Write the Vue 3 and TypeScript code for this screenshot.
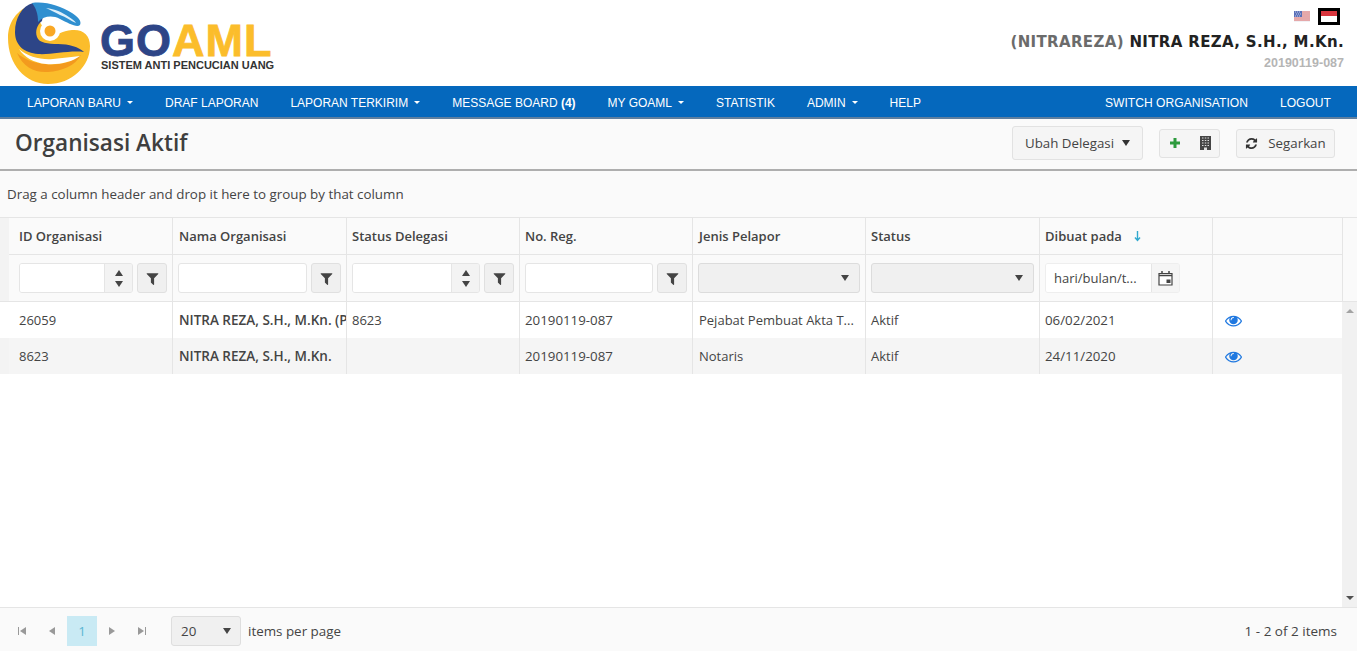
<script setup lang="ts">
interface Row { id: string; name: string; del: string; reg: string; jenis: string; status: string; date: string }
const rows: Row[] = [
  { id: '26059', name: 'NITRA REZA, S.H., M.Kn. (PPAT)', del: '8623', reg: '20190119-087', jenis: 'Pejabat Pembuat Akta T...', status: 'Aktif', date: '06/02/2021' },
  { id: '8623', name: 'NITRA REZA, S.H., M.Kn.', del: '', reg: '20190119-087', jenis: 'Notaris', status: 'Aktif', date: '24/11/2020' }
]
const navLeft = [
  { t: 'LAPORAN BARU', c: true }, { t: 'DRAF LAPORAN', c: false }, { t: 'LAPORAN TERKIRIM', c: true },
  { t: 'MESSAGE BOARD', b: '(4)', c: false }, { t: 'MY GOAML', c: true }, { t: 'STATISTIK', c: false },
  { t: 'ADMIN', c: true }, { t: 'HELP', c: false }
]
const filter = 'M1595 295q17 41-14 70l-493 493v742q0 42-39 59-13 5-25 5-27 0-45-19l-256-256q-19-19-19-45v-486l-493-493q-31-29-14-70 17-39 59-39h1280q42 0 59 39z'
const eye = 'M1664 960q-152-236-381-353 61 104 61 225 0 185-131.500 316.500t-316.500 131.500-316.500-131.500-131.500-316.500q0-121 61-225-229 117-381 353 133 205 333.500 326.500t434.500 121.500 434.500-121.500 333.500-326.500zm-720-384q0-20-14-34t-34-14q-125 0-214.500 89.500t-89.500 214.500q0 20 14 34t34 14 34-14 14-34q0-86 61-147t147-61q20 0 34-14t14-34zm848 384q0 34-20 69-140 230-376.500 368.500t-499.500 138.500-499.500-139-376.500-368q-20-35-20-69t20-69q140-229 376.500-368t499.500-139 499.500 139 376.500 368q20 35 20 69z'
const refresh = 'M1639 1056q0 5-1 7-64 268-268 434.500t-478 166.500q-146 0-282.500-55t-243.500-157l-129 129q-19 19-45 19t-45-19-19-45v-448q0-26 19-45t45-19h448q26 0 45 19t19 45-19 45l-137 137q71 66 161 102t187 36q134 0 250-65t186-179q11-17 53-117 8-23 30-23h192q13 0 22.500 9.500t9.500 22.500zm25-800v448q0 26-19 45t-45 19h-448q-26 0-45-19t-19-45 19-45l138-138q-148-137-349-137-134 0-250 65t-186 179q-11 17-53 117-8 23-30 23h-199q-13 0-22.500-9.500t-9.500-22.500v-7q65-268 270-434.500t480-166.500q146 0 284 55.500t245 156.500l130-129q19-19 45-19t45 19 19 45z'
</script>

<template>
  <div class="page">
    <header class="top">
      <div class="logo">
        <svg class="mark" width="84" height="84" viewBox="7 1 84 84">
          <path d="M30 5C14 12 8 25 8 38c0 26 17 46 40 46 24 0 42-18 42-38 0-11-7-17-18-16-10 1-16 6-24 6z" fill="#fbbd2b"/>
          <path d="M17 53c6 14 18 20 31 19 14-1 27-6 33-17-9 7-22 11-36 9-12-1-21-5-28-11z" fill="#f39a1e"/>
          <path d="M19 49c9 8 22 11 34 10 9-1 19-2 27-3-8 6-21 9-34 8-12-1-22-7-27-15z" fill="#fff"/>
          <path d="M33 3C22 6 15 18 15 32c0 14 10 21 23 22 13 1 32-4 46-2-5-5-15-8-26-8-10 0-19-1-21-7-2-6 0-12 5-16 2-8-1-14-9-18z" fill="#2d4587"/>
          <path d="M32 3c14-2 28 3 40 10 6 4 10 8 8 12-3 3-12-2-20-6-8-4-16-3-22 3 0-8-2-14-6-19z" fill="#2f8fd0"/>
          <path d="M46 8c9 1 16 4 23 9 3 2 6 4 7 6-5-2-10-6-16-8-5-3-10-5-14-7z" fill="#dff0fa"/>
          <circle cx="50" cy="31" r="10" fill="#fff"/>
          <circle cx="50" cy="31" r="5.500" fill="#f9a825"/>
        </svg>
        <div class="logotext">
          <div class="word"><span class="go">GO</span><span class="aml">AML</span></div>
          <div class="tag">SISTEM ANTI PENCUCIAN UANG</div>
        </div>
      </div>
      <div class="user">
        <div class="flags">
          <svg class="us" width="16" height="11" viewBox="0 0 16 11">
            <rect width="16" height="11" fill="#f1f1f5"/>
            <path d="M0 1h16M0 3h16M0 5h16M0 7h16M0 9h16" stroke="#d9605f" stroke-width="1"/>
            <rect width="8" height="6" fill="#5a70b8"/>
            <path d="M1 1h1M3 1h1M5 1h1M2 3h1M4 3h1M6 3h1M1 5h1M3 5h1M5 5h1" stroke="#dfe4f5" stroke-width=".8"/>
          </svg>
          <span class="id-box"><span class="id-flag"></span></span>
        </div>
        <div class="name"><span class="uname">(NITRAREZA)</span> NITRA REZA, S.H., M.Kn.</div>
        <div class="reg">20190119-087</div>
      </div>
    </header>

    <nav class="nav">
      <div class="nav-group left">
        <a v-for="n in navLeft" :key="n.t" class="nav-item">
          {{ n.t }}<b v-if="n.b">&nbsp;{{ n.b }}</b><i v-if="n.c" class="caret"></i>
        </a>
      </div>
      <div class="nav-group">
        <a class="nav-item">SWITCH ORGANISATION</a>
        <a class="nav-item">LOGOUT</a>
      </div>
    </nav>

    <section class="titlebar">
      <h1>Organisasi Aktif</h1>
      <div class="actions">
        <button class="btn big">Ubah Delegasi<i class="tri"></i></button>
        <div class="btn pair">
          <svg width="12" height="12" viewBox="0 0 12 12"><path d="M4.500 1h3v3.500H11v3H7.500V11h-3V7.500H1v-3h3.500z" fill="#2e9b3e"/></svg>
          <svg width="11" height="14" viewBox="0 0 11 14">
            <rect x="0" y="0" width="11" height="14" fill="#444"/>
            <path d="M2 2h1.500M4.800 2h1.500M7.500 2H9M2 4.500h1.500M4.800 4.500h1.500M7.500 4.500H9M2 7h1.500M4.800 7h1.500M7.500 7H9M2 9.500h1.500M4.800 9.500h1.500M7.500 9.500H9" stroke="#ddd" stroke-width="1.200"/>
            <rect x="4" y="11.500" width="3" height="2.500" fill="#ddd"/>
          </svg>
        </div>
        <button class="btn seg">
          <svg width="13" height="13" viewBox="0 0 1792 1792"><path :d="refresh" fill="#333"/></svg>
          Segarkan
        </button>
      </div>
    </section>

    <div class="groupbar">Drag a column header and drop it here to group by that column</div>

    <div class="grid">
      <div class="head-wrap">
        <div class="row head">
          <div class="gcell"></div>
          <div class="c">ID Organisasi</div>
          <div class="c tx">Nama Organisasi</div>
          <div class="c">Status Delegasi</div>
          <div class="c">No. Reg.</div>
          <div class="c tx">Jenis Pelapor</div>
          <div class="c">Status</div>
          <div class="c">Dibuat pada
            <svg class="sort" width="9" height="12" viewBox="0 0 9 12"><path d="M4.500 1v9M2 7.500l2.500 3 2.500-3" fill="none" stroke="#31a9cf" stroke-width="1.400"/></svg>
          </div>
          <div class="c"></div>
        </div>
        <div class="row filt">
          <div class="gcell"></div>
          <div class="c f">
            <div class="num"><span class="inp"></span><span class="spin"><i class="up"></i><i class="dn"></i></span></div>
            <span class="fbtn"><svg width="15" height="15" viewBox="0 0 1792 1792"><path :d="filter" fill="#444"/></svg></span>
          </div>
          <div class="c f">
            <span class="inp solo"></span>
            <span class="fbtn"><svg width="15" height="15" viewBox="0 0 1792 1792"><path :d="filter" fill="#444"/></svg></span>
          </div>
          <div class="c f">
            <div class="num wide"><span class="inp"></span><span class="spin"><i class="up"></i><i class="dn"></i></span></div>
            <span class="fbtn"><svg width="15" height="15" viewBox="0 0 1792 1792"><path :d="filter" fill="#444"/></svg></span>
          </div>
          <div class="c f">
            <span class="inp solo s128"></span>
            <span class="fbtn"><svg width="15" height="15" viewBox="0 0 1792 1792"><path :d="filter" fill="#444"/></svg></span>
          </div>
          <div class="c f"><span class="sel"><i class="dn"></i></span></div>
          <div class="c f"><span class="sel s163"><i class="dn"></i></span></div>
          <div class="c f">
            <div class="date">
              <span class="dtxt">hari/bulan/t...</span>
              <span class="cal">
                <svg width="15" height="16" viewBox="0 0 15 16">
                  <path d="M1 3.500h13v11.500H1z" fill="#fff" stroke="#444" stroke-width="1.200"/>
                  <path d="M1 5.500h13" stroke="#444" stroke-width="1.500"/>
                  <path d="M4 1v3M11 1v3" stroke="#444" stroke-width="1.500"/>
                  <rect x="8.500" y="9.500" width="4" height="3.500" fill="#444"/>
                </svg>
              </span>
            </div>
          </div>
          <div class="c"></div>
        </div>
      </div>

      <div class="body">
        <div class="rows">
          <div v-for="(r, i) in rows" :key="r.id" class="row data" :class="{ alt: i === 1 }">
            <div class="c">{{ r.id }}</div>
            <div class="c strong tx">{{ r.name }}</div>
            <div class="c">{{ r.del }}</div>
            <div class="c num-txt">{{ r.reg }}</div>
            <div class="c tx">{{ r.jenis }}</div>
            <div class="c">{{ r.status }}</div>
            <div class="c num-txt">{{ r.date }}</div>
            <div class="c"><svg class="eye" width="17" height="17" viewBox="0 0 1792 1792"><path :d="eye" fill="#1f78e0"/></svg></div>
          </div>
        </div>
        <div class="scroll">
          <i class="s-up"></i>
          <i class="s-dn"></i>
        </div>
      </div>

      <footer class="pager">
        <div class="pg-left">
          <span class="pg"><i class="bar"></i><i class="tl"></i></span>
          <span class="pg"><i class="tl"></i></span>
          <span class="pg cur">1</span>
          <span class="pg"><i class="tr"></i></span>
          <span class="pg"><i class="tr"></i><i class="bar"></i></span>
          <span class="size">20<i class="dn"></i></span>
          <span class="ipp">items per page</span>
        </div>
        <div class="count">1 - 2 of 2 items</div>
      </footer>
    </div>
  </div>
</template>

<style>
html, body { margin: 0; padding: 0; background: #fff; overflow: hidden; }
</style>

<style scoped>
.page { height: 651px; display: flex; flex-direction: column; font-family: "Open Sans", "Noto Sans", sans-serif; font-size: 13px; color: #444; overflow: hidden; }
.top { height: 86px; flex: none; background: #fff; display: flex; justify-content: space-between; padding: 0 13px 0 7px; box-sizing: border-box; }
.logo { display: flex; align-items: flex-start; }
.mark { margin-top: 1px; flex: none; }
.logotext { margin: 22px 0 0 9px; }
.word { font-family: "Liberation Sans", sans-serif; font-weight: 700; font-size: 45px; line-height: 37px; letter-spacing: 1px; height: 37px; -webkit-text-stroke: .8px currentColor; }
.go { color: #2d4587; }
.aml { color: #fbbd2b; }
.tag { font-family: "Liberation Sans", sans-serif; font-weight: 700; font-size: 11px; line-height: 12px; color: #333; white-space: nowrap; margin-left: 1px; }
.user { display: flex; flex-direction: column; align-items: flex-end; }
.flags { display: flex; align-items: center; gap: 8px; margin-top: 8px; padding-right: 4px; height: 17px; }
.id-box { width: 22px; height: 17px; background: #000; display: flex; align-items: center; justify-content: center; }
.id-flag { width: 16px; height: 11px; background: linear-gradient(#d9363e 50%, #fff 50%); }
.name { font-family: "DejaVu Sans", sans-serif; font-weight: 700; font-size: 15px; line-height: 18px; color: #222; margin-top: 8px; letter-spacing: .35px; white-space: nowrap; }
.uname { color: #6b6b6b; }
.reg { font-family: "Liberation Sans", sans-serif; font-weight: 700; font-size: 12.500px; line-height: 14px; color: #b5b5b5; margin-top: 5px; }

.nav { height: 33px; flex: none; background: #0568bd; border-bottom: 2px solid #5f7f9f; box-sizing: border-box; display: flex; justify-content: space-between; padding: 0 10px 0 11px; font-family: "Liberation Sans", sans-serif; font-size: 12.100px; color: #fff; }
.nav-group { display: flex; }
.left { font-size: 12px; }
.nav-item { display: flex; align-items: center; padding: 2px 16px 0; white-space: pre; }
.caret { width: 0; height: 0; border-left: 3px solid transparent; border-right: 3px solid transparent; border-top: 3px solid #fff; margin-left: 6px; }

.titlebar { height: 52px; flex: none; background: #fafafa; border-bottom: 2px solid #aeaeae; box-sizing: border-box; display: flex; justify-content: space-between; align-items: center; padding: 0 22px 2px 15px; font-size: 13.300px; }
h1 { margin: 0 0 2px; font-size: 22.600px; font-weight: 600; color: #3f3f3f; }
.actions { display: flex; align-items: center; gap: 16px; }
.btn { font: inherit; color: #444; background: #f5f5f5; border: 1px solid #e2e2e2; border-radius: 3px; box-sizing: border-box; display: flex; align-items: center; padding: 0; }
.big { height: 34px; width: 131px; justify-content: center; gap: 8px; }
.pair { height: 29px; width: 61px; justify-content: center; gap: 19px; }
.seg { height: 29px; width: 99px; justify-content: center; gap: 10px; }
.tri { width: 0; height: 0; border-left: 4px solid transparent; border-right: 4px solid transparent; border-top: 6px solid #333; }

.groupbar { height: 47px; flex: none; background: #fafafa; box-sizing: border-box; padding: 14px 0 0 7px; line-height: 18px; border-bottom: 1px solid #e5e5e5; font-size: 13.370px; }

.grid { flex: 1; display: flex; flex-direction: column; min-height: 0; }
.row { display: grid; grid-template-columns: 9px 163px 174px 173px 173px 173px 174px 173px 131px; }
.head-wrap { background: #fafafa; flex: none; }
.head { height: 37px; }
.head .c { font-weight: 600; line-height: 36px; border-bottom: 1px solid #e5e5e5; }
.filt { border-bottom: 1px solid #e5e5e5; height: 46px; }
.gcell { background: #f3f3f3; }
.c { border-left: 1px solid #e5e5e5; padding: 0 5px; box-sizing: border-box; white-space: nowrap; overflow: hidden; position: relative; }
.tx { padding-left: 6px; }
.row > .gcell + .c { border-left: 0; padding-left: 10px; }
.head > .c:last-child, .filt > .c:last-child { border-right: 1px solid #e5e5e5; }
.sort { margin-left: 8px; vertical-align: -1px; }
.f { display: flex; align-items: center; gap: 4px; }
.inp { display: block; background: #fff; box-sizing: border-box; height: 30px; }
.solo { width: 129px; border: 1px solid #e5e5e5; border-radius: 3px; flex: none; }
.s128 { width: 128px; }
.num { display: flex; width: 114px; height: 30px; flex: none; border: 1px solid #e5e5e5; border-radius: 3px; box-sizing: border-box; overflow: hidden; }
.num .inp { width: 85px; height: 28px; border-right: 1px solid #e5e5e5; flex: none; }
.num.wide { width: 128px; }
.num.wide .inp { width: 99px; }
.spin { flex: 1; background: #f3f3f3; display: flex; flex-direction: column; align-items: center; justify-content: center; gap: 5px; }
.up { width: 0; height: 0; border-left: 4px solid transparent; border-right: 4px solid transparent; border-bottom: 6px solid #444; display: block; }
.dn { width: 0; height: 0; border-left: 4px solid transparent; border-right: 4px solid transparent; border-top: 6px solid #444; display: block; }
.fbtn { width: 30px; height: 30px; background: #f0f0f0; border: 1px solid #e0e0e0; border-radius: 3px; box-sizing: border-box; display: flex; align-items: center; justify-content: center; flex: none; }
.sel { width: 162px; height: 30px; background: #f0f0f0; border: 1px solid #dcdcdc; border-radius: 3px; box-sizing: border-box; display: flex; align-items: center; justify-content: flex-end; padding-right: 10px; flex: none; }
.s163 { width: 163px; }
.date { display: flex; width: 135px; height: 30px; border: 1px solid #eee; border-radius: 3px; box-sizing: border-box; overflow: hidden; flex: none; }
.dtxt { width: 105px; background: #fff; padding-left: 8px; line-height: 28px; box-sizing: border-box; }
.cal { flex: 1; background: #f5f5f5; border-left: 1px solid #e5e5e5; display: flex; align-items: center; justify-content: center; }

.body { flex: 1; display: flex; min-height: 0; background: #fff; }
.rows { width: 1342px; }
.data { height: 36px; grid-template-columns: 172px 174px 173px 173px 173px 174px 173px 130px; }
.data .c { line-height: 36px; }
.data .c:first-child { padding-left: 19px; background: #fff; border-left: 0; }
.num-txt { font-size: 13.300px; }
.alt { background: #f5f5f5; }
.alt .c:first-child { background: linear-gradient(to right, #f3f3f3 9px, #f5f5f5 9px); }
.strong { font-weight: 600; font-size: 13.500px; }
.eye { position: absolute; left: 12px; top: 10px; }
.scroll { flex: 1; background: #f1f1f1; position: relative; }
.s-up { position: absolute; top: 7px; left: 4px; width: 0; height: 0; border-left: 4px solid transparent; border-right: 4px solid transparent; border-bottom: 4px solid #a3a3a3; }
.s-dn { position: absolute; bottom: 7px; left: 4px; width: 0; height: 0; border-left: 4px solid transparent; border-right: 4px solid transparent; border-top: 4px solid #505050; }

.pager { height: 44px; flex: none; background: #fafafa; border-top: 1px solid #e5e5e5; box-sizing: border-box; display: flex; align-items: center; justify-content: space-between; padding: 3px 20px 0 7px; font-size: 13.400px; }
.count { font-size: 13.500px; }
.pg-left { display: flex; align-items: center; }
.pg { width: 30px; height: 30px; display: flex; align-items: center; justify-content: center; gap: 1px; }
.cur { background: #c9eaf4; color: #5bb6d3; }
.bar { width: 1px; height: 8px; background: #999; }
.tl { width: 0; height: 0; border-top: 4px solid transparent; border-bottom: 4px solid transparent; border-right: 6px solid #999; }
.tr { width: 0; height: 0; border-top: 4px solid transparent; border-bottom: 4px solid transparent; border-left: 6px solid #999; }
.size { margin-left: 14px; width: 70px; height: 30px; background: #f0f0f0; border: 1px solid #dedede; border-radius: 3px; box-sizing: border-box; display: flex; align-items: center; justify-content: space-between; padding: 0 9px; }
.ipp { margin-left: 7px; }
</style>
